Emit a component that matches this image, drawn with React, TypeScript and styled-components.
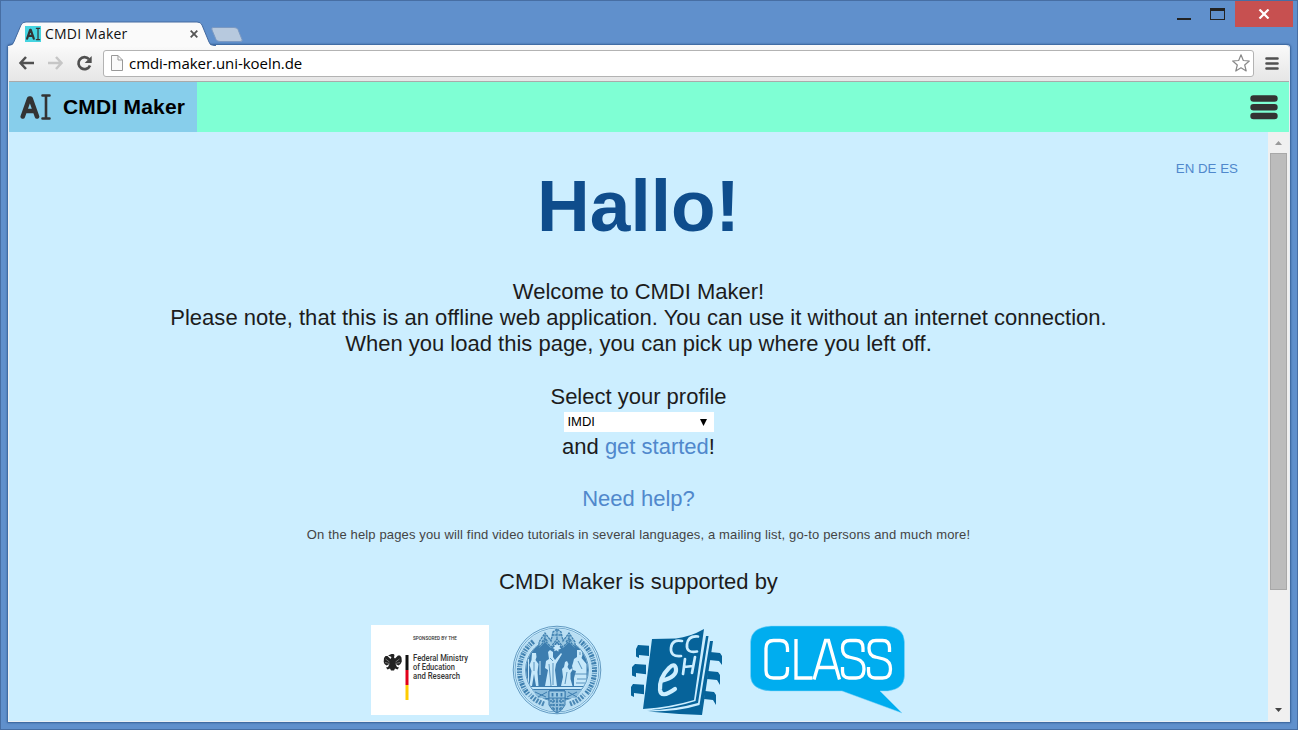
import React from "react";
import styled, { createGlobalStyle } from "styled-components";

const GlobalStyle = createGlobalStyle`
  * { box-sizing: border-box; }
  html, body { margin: 0; padding: 0; overflow: hidden; }
  body { font-family: "Liberation Sans", Arial, sans-serif; font-variant-ligatures: none; }
`;

const Window = styled.div`
  width: 1298px;
  height: 730px;
  padding: 0 7px 7px;
  border: 1px solid #476ea3;
  background: #6090cc;
  display: flex;
  flex-direction: column;
`;

const TitleBar = styled.header`
  height: 44px;
  display: flex;
  justify-content: space-between;
  align-items: flex-start;
  flex: none;
`;

const TabStrip = styled.div`
  display: flex;
  padding-top: 20px;
`;

const Tab = styled.div`
  position: relative;
  z-index: 1;
  width: 204px;
  height: 26px;
  padding: 0 14px 1px 17px;
  display: flex;
  align-items: center;
`;

const TabShape = styled.svg`
  position: absolute;
  left: 0;
  top: 0;
  z-index: -1;
`;

const TabTitle = styled.span`
  flex: 1;
  margin-left: 4px;
  font: 14px/20px "Open Sans", "Segoe UI", sans-serif;
  letter-spacing: 0.2px;
  color: #111;
  white-space: nowrap;
`;

const NewTab = styled.svg`
  margin: 4px 0 0 -2px;
`;

const WindowControls = styled.div`
  display: flex;
  align-items: flex-start;
  margin-right: -3px;
`;

const CloseButton = styled.div`
  width: 58px;
  height: 26px;
  padding-right: 1px;
  background: #c75050;
  display: flex;
  align-items: center;
  justify-content: center;
`;

const Browser = styled.div`
  flex: 1;
  min-height: 0;
  display: flex;
  flex-direction: column;
  border: 1px solid #e9eef3;
  border-top: 0;
  border-radius: 3px 3px 0 0;
  box-shadow: 0 0 2px 1px #365f96;
`;

const Toolbar = styled.div`
  height: 37px;
  flex: none;
  display: flex;
  align-items: center;
  padding: 0 9px 0 8px;
  background: linear-gradient(#fafafa, #e6e6e6);
  border-bottom: 1px solid #aaaaaa;
  border-radius: 3px 3px 0 0;
`;

const NavIcon = styled.svg`
  flex: none;
  margin-right: 10px;
`;

const AddressBar = styled.div`
  width: 1151px;
  height: 27px;
  margin: 0 11px 0 0;
  padding: 0 3px 0 7px;
  border: 1px solid #b3b3b3;
  border-radius: 3px;
  background: #fff;
  display: flex;
  align-items: center;
`;

const Address = styled.span`
  flex: 1;
  margin-left: 6px;
  font: 15px/22px "Open Sans", "Segoe UI", sans-serif;
  letter-spacing: -0.05px;
  color: #000;
`;

const AppBar = styled.div`
  height: 50px;
  flex: none;
  display: flex;
  justify-content: space-between;
  background: #7fffd4;
`;

const Brand = styled.div`
  width: 188px;
  padding-left: 11px;
  display: flex;
  align-items: center;
  background: #87ceeb;
  font-size: 21px;
  font-weight: bold;
  letter-spacing: 0.2px;
  color: #000;
  white-space: nowrap;
`;

const BrandName = styled.span`
  margin-left: 11px;
`;

const MenuIcon = styled.svg`
  margin: 13px 11px 0 0;
`;

const Viewport = styled.div`
  flex: 1;
  min-height: 0;
  display: flex;
`;

const Page = styled.main`
  flex: 1;
  overflow: hidden;
  background: #cceeff;
  color: #1c1c1c;
  text-align: center;
  font-size: 22px;
  line-height: 26px;
`;

const Languages = styled.nav`
  height: 46px;
  padding: 28px 30px 0 0;
  text-align: right;
  font-size: 13.33px;
  line-height: 18px;
  color: #5088cc;
`;

const Greeting = styled.h1`
  margin: -11px 0 0;
  font-size: 73px;
  line-height: 78px;
  color: #0f4d8c;
`;

const Paragraph = styled.p<{ $top: number }>`
  margin: ${(p) => p.$top}px 0 0;
`;

const Notice = styled.span`
  letter-spacing: 0.025px;
`;

const Link = styled.a`
  color: #5088cc;
`;

const ProfileSelect = styled.div`
  width: 150px;
  height: 20px;
  margin: 2px auto 1px;
  padding: 0 6px 0 4px;
  background: #fff;
  display: flex;
  justify-content: space-between;
  align-items: center;
  font-size: 13px;
  line-height: 20px;
  color: #000;
`;

const Hint = styled.p`
  margin: 14px 0 0;
  font-size: 13px;
  line-height: 18px;
  letter-spacing: 0.145px;
  color: #444;
`;

const Sponsors = styled.div`
  display: flex;
  justify-content: center;
  align-items: flex-start;
  margin-top: 30px;
  padding-left: 2px;
`;

const SponsorLogo = styled.svg<{ $gap?: number }>`
  flex: none;
  margin-left: ${(p) => p.$gap ?? 0}px;
`;

const Scrollbar = styled.div`
  width: 21px;
  flex: none;
  background: #f0f0f0;
  display: flex;
  flex-direction: column;
  align-items: center;
`;

const Arrow = styled.svg`
  flex: none;
`;

const Thumb = styled.div`
  width: 17px;
  height: 437px;
  background: #bcbcbc;
  border: 1px solid #a8a8a8;
`;

const Track = styled.div`
  flex: 1;
`;

const AiGlyph = () => (
  <g fill="none" stroke="#333" strokeLinecap="round" strokeLinejoin="round">
    <path d="M2.800 22.500 9.200 4.500h1.400l6.400 18M5.500 17h9.500" strokeWidth="4.600" />
    <path d="M22.500 1.500h7M22.500 24.500h7M26 2v22" strokeWidth="2.600" />
  </g>
);

const MinistryLogo = () => (
  <SponsorLogo width="118" height="90" viewBox="0 0 118 90">
    <rect width="118" height="90" fill="#fff" />
    <g fontFamily="Roboto, sans-serif" fill="#333">
      <text x="42" y="15" fontSize="5.400" fontWeight="500" textLength="44" lengthAdjust="spacingAndGlyphs">SPONSORED BY THE</text>
      <g fontSize="8.400" fontWeight="500">
        <text x="42" y="36" textLength="55" lengthAdjust="spacingAndGlyphs">Federal Ministry</text>
        <text x="42" y="45" textLength="42" lengthAdjust="spacingAndGlyphs">of Education</text>
        <text x="42" y="54" textLength="47" lengthAdjust="spacingAndGlyphs">and Research</text>
      </g>
    </g>
    <rect x="34.5" y="30" width="3" height="15" fill="#111" />
    <rect x="34.5" y="45" width="3" height="15" fill="#e2001a" />
    <rect x="34.5" y="60" width="3" height="15" fill="#fc0" />
    <g fill="#222">
      <path d="M20.500 32l-3.500-1.500 3.500-1.500h2l1 1-.5 2.500 1 1 3-3 2 0 1.500 2 .3 4-1.300 2.500-2 1.500-3-1.500 1.500 3 2 .5-1.500 2-2.500-1-1 2h-3l-1-2-2.500 1-1.500-2 2-.5 1.500-3-3 1.500-2-1.500L12.700 37l.3-4 1.500-2h2l3 3z" />
    </g>
    <path d="M14.500 34l4 3M14 37.500l4.500 1M28.500 34l-4 3M29 37.500l-4.500 1" stroke="#aaa" strokeWidth=".6" />
  </SponsorLogo>
);

const UniversitySeal = () => (
  <SponsorLogo $gap={22} width="92" height="92" viewBox="0 0 92 92">
    <defs>
      <clipPath id="sealInner"><circle cx="46" cy="45" r="31" /></clipPath>
    </defs>
    <g fill="none" stroke="#6199c1">
      <circle cx="46" cy="45" r="43.800" strokeWidth="1" />
      <circle cx="46" cy="45" r="42" strokeWidth=".8" />
      <circle cx="46" cy="45" r="31.500" strokeWidth="1" />
    </g>
    <circle cx="46" cy="45" r="36.800" fill="none" stroke="#b9def3" strokeWidth="8.500" />
    <path
      d="M17 69A37 37 0 0 1 23 16M69 16A37 37 0 0 1 75 69"
      fill="none" stroke="#3f80b0" strokeWidth="5" strokeDasharray="1.500 1.100 2.200 .9 .8 1.200"
    />
    <path
      d="M15 69A39 39 0 0 1 22 15M70 15A39 39 0 0 1 77 69"
      fill="none" stroke="#6fa5ca" strokeWidth="1.500" strokeDasharray="1 3.200"
    />
    <path d="M33 79A37 37 0 0 1 19 70M59 79A37 37 0 0 0 73 70" fill="none" stroke="#4b88b5" strokeWidth="5" strokeDasharray="2 1.200" />
    <circle cx="46" cy="45" r="31" fill="#3c7daf" />
    <g clipPath="url(#sealInner)" fill="#c6e8fa">
      <path d="M21 28h4l.5 4-1 3 3 4-1 8 1 14h-2.500l-2-12-2 12h-2.500l2-15-2-6 2-5z" />
      <path d="M17.500 34v28M29 36v14" fill="none" stroke="#c6e8fa" strokeWidth="1" />
      <path d="M37 27l2-2 3 2v5l2 3 6-7 1 1-6 10-1 6 2 16H34l3-16-3-2 1-7 3-2z" />
      <path d="M54 37l2-1 1.500 3-1 3 2 3 3-2v2l-2 3v6l2 7H50l2-9-1-8 2-2z" />
      <path d="M66 25h4.500l1 5-1 3 5 6v22H63v-8l2-7-3-1-1-4 1-3 1-4 3-2z" />
      <path d="M63 49h14M66 54h11M65 58h13M38 39l2 22M42 38v22M56 47l-2 12M67 36l4 8M69 27v3M23 37v9M39 33l3 3" fill="none" stroke="#4c8bb8" strokeWidth=".9" />
      <path d="M14 62h64v2H14z" />
      <path d="M46 18l1 2.300 2.600-.5-1.100 2.300 1.600 1.700-2.600.6-.1 2.300-2-1.500-2.200 1.100.4-2.300-2.100-1 2.300-1.300-.8-2.300 2.100.8z" />
    </g>
    <path d="M28 23v-6l6-9 6 8 2-9 4-3 4 3 2 9 6-8 6 9v6l-6-6-6 6-6-7-6 7-6-6z" fill="#9ac7e2" />
    <path
      d="M28 23v-6l6-9 6 8 2-9 4-3 4 3 2 9 6-8 6 9v6M28 22l6-6 6 6 6-8 6 8 6-6 6 6M34 10v6M46 5v9M58 10v6M41 10h10M31 17l3-4 3 4M55 17l3-4 3 4"
      fill="none" stroke="#3f80b0" strokeWidth="1.300" strokeDasharray="2.500 .7"
    />
    <path d="M21 65h17v8H27zM54 65h17l-6 8H54z" fill="#8bbcdc" />
    <path d="M24 67l11 5M27 72l9-5M57 67l9 5M56 72l10-5" stroke="#3c7daf" />
    <path d="M38 66h16v14q-3 6-8 8-5-2-8-8z" fill="#8fbddb" stroke="#3c7daf" />
    <path d="M38 66h16v7H38z" fill="#9cc9e4" stroke="#3c7daf" />
    <path d="M41.500 68v3.500M46 68v3.500M50.500 68v3.500" stroke="#3c7daf" strokeWidth="1.800" />
    <path d="M39 76h14M39 80h14M42 84h8M42 73v11M46 73v14M50 73v11" stroke="#3c7daf" strokeWidth="1.300" strokeDasharray="2 1" />
  </SponsorLogo>
);

const CcehLogo = () => (
  <SponsorLogo $gap={26} width="95" height="92" viewBox="0 0 95 92">
    <g fill="#06639a">
      <path d="M9 20l11 .7V31L10 30v3l-3-1.500V24zM6 39l11 .7v9.600L7 48v4l-4-1.500V42zM4 59l11 .7v9.600L5 68v4l-3-1.500V62z" />
      <path d="M81 27l10 1 2 3v9l-3-4-10-1zM79 46l10 1 2 3v10l-3-5-10-1zM76 66l9 1 2 3v10l-3-5-9-1z" />
      <path d="M23 14l24-.500Q61 12 75 4L65 75q-23 7-51 9z" />
      <path d="M77 11h2.500L69 78q-25 7-51 7.500Q45 83 66.500 76z" />
      <path d="M81 16h3l-11 74q-28-1-54-3.500Q48 87 70.500 80z" />
    </g>
    <g fill="none" stroke="#cceeff" strokeLinecap="round">
      <path d="M53 16q-10-2-11 7t10 8M69 11.500q-10-1-11 8t10 7M56 34l-2 15M66 32l-3 16M55 42l9-1" strokeWidth="2.700" />
      <path d="M32 56Q48 52 47 44q-1-7-7-1-10 10-9 22 1 9 15-1" strokeWidth="4.200" />
    </g>
  </SponsorLogo>
);

const ClassLogo = () => (
  <SponsorLogo $gap={26} width="158" height="92" viewBox="0 0 158 92">
    <path
      d="M21 1H136Q154 2 154.500 17V51Q154 64 138 66H130L152 88 92 66H21Q1 65 .5 51V17Q1 2 21 1z"
      fill="#00adef" stroke="#8ad4f7" strokeWidth=".5"
    />
    <g fill="none" stroke="#fff" strokeWidth="3.300">
      <path d="M37.500 27v-3.500Q37.500 15.500 30 15.500H23.500Q16 15.500 16 23.500V45.500Q16 53 23.500 53H30Q37.500 53 37.500 45.500V42" />
      <path d="M46 14V53H62.500" />
      <path d="M64 54.500L75.500 15.500H78.500L89.500 54.500M68 42.500H86" />
      <path d="M113 27V23Q113 15.500 106 15.500H100Q92.500 15.500 92.500 23 92.500 31 99 32L107 34Q114 36 114 44 114 53 106 53H99Q92.500 53 92.500 46V42" />
      <path d="M139.500 27V23Q139.500 15.500 132.500 15.500H126Q119 15.500 119 23 119 31 125.500 32L133.500 34Q140.500 36 140.500 44 140.500 53 132.500 53H125Q118.500 53 118.500 46V42" />
    </g>
  </SponsorLogo>
);

export default function App() {
  return (
    <>
      <GlobalStyle />
      <Window>
        <TitleBar>
          <TabStrip>
            <Tab>
              <TabShape width="212" height="26" viewBox="0 0 212 26">
                <path d="M0 26v-1q5 0 6-4L13 4q1-3 5-3H189q4 0 5 3l7 17q1 4 5 4v1z" fill="#fafafa" />
                <path d="M0 24.500q5 0 6-4L13 4q1-3 5-3H189q4 0 5 3l7 17q1 3.500 5 3.500h2" fill="none" stroke="#456ba0" />
              </TabShape>
              <svg width="16" height="16" viewBox="0 0 16 16">
                <rect width="16" height="16" fill="#45d4e0" />
                <g transform="translate(.8 1.600) scale(.47 .49)"><AiGlyph /></g>
              </svg>
              <TabTitle>CMDI Maker</TabTitle>
              <svg width="8" height="8" viewBox="0 0 8 8">
                <path d="M.7.7l6.600 6.600M7.300.7L.7 7.300" stroke="#555" strokeWidth="1.800" />
              </svg>
            </Tab>
            <NewTab width="33" height="18" viewBox="0 0 33 18">
              <path d="M3 2.500h21q3 0 4 2l4 10q1 2-2 2H10q-3 0-4-2L2 5q-1-2.500 1-2.500z" fill="#b7c9de" stroke="#7b99c2" />
            </NewTab>
          </TabStrip>
          <WindowControls>
            <svg width="58" height="26" viewBox="0 0 58 26">
              <path d="M0 17h14v2H0z" fill="#222" />
              <path d="M33 7h15v12H33zM34 10v8h13v-8z" fill="#222" fillRule="evenodd" />
            </svg>
            <CloseButton>
              <svg width="12" height="10" viewBox="0 0 12 10">
                <path d="M1.500.5l9 9M10.500.5l-9 9" stroke="#fff" strokeWidth="2.200" />
              </svg>
            </CloseButton>
          </WindowControls>
        </TitleBar>
        <Browser>
          <Toolbar>
            <NavIcon width="20" height="18" viewBox="0 0 20 18">
              <path d="M9 3L3.500 9 9 15M3.500 9H17" fill="none" stroke="#505050" strokeWidth="2.500" />
            </NavIcon>
            <NavIcon width="18" height="18" viewBox="0 0 18 18">
              <path d="M9 3l5.500 6L9 15M14.500 9H1" fill="none" stroke="#c6c6c6" strokeWidth="2.500" />
            </NavIcon>
            <NavIcon width="18" height="18" viewBox="0 0 18 18">
              <path d="M14 5.200A6 6 0 1 0 15 11.500" fill="none" stroke="#505050" strokeWidth="2.700" />
              <path d="M16.700 2v7H9.700z" fill="#505050" />
            </NavIcon>
            <AddressBar>
              <svg width="12" height="16" viewBox="0 0 12 16">
                <path d="M.5.5h6.500l4.500 4.500v10.500H.5zM7 .5V5h4.500" fill="#fafafa" stroke="#999" />
              </svg>
              <Address>cmdi-maker.uni-koeln.de</Address>
              <svg width="18" height="18" viewBox="0 0 18 18">
                <path d="M9 .8l2.300 5.700 6 .5-4.600 4 1.500 6L9 13.800 3.800 17l1.500-6L.7 7l6-.5z" fill="#fff" stroke="#888" strokeWidth="1.200" strokeLinejoin="round" />
              </svg>
            </AddressBar>
            <svg width="14" height="14" viewBox="0 0 14 14">
              <path d="M1.500 2.500h11M1.500 7.500h11M1.500 12.500h11" stroke="#505050" strokeWidth="2.600" strokeLinecap="round" />
            </svg>
          </Toolbar>
          <AppBar>
            <Brand>
              <svg width="32" height="26" viewBox="0 0 32 26"><AiGlyph /></svg>
              <BrandName>CMDI Maker</BrandName>
            </Brand>
            <MenuIcon width="28" height="25" viewBox="0 0 28 25">
              <path d="M3.500 3.500h21M3.500 12.300h21M3.500 21h21" stroke="#333" strokeWidth="6.400" strokeLinecap="round" />
            </MenuIcon>
          </AppBar>
          <Viewport>
            <Page>
              <Languages>EN DE ES</Languages>
              <Greeting>Hallo!</Greeting>
              <Paragraph $top={34}>
                Welcome to CMDI Maker!<br />
                <Notice>Please note, that this is an offline web application. You can use it without an internet connection.</Notice><br />
                When you load this page, you can pick up where you left off.
              </Paragraph>
              <Paragraph $top={27}>Select your profile</Paragraph>
              <ProfileSelect>
                IMDI
                <svg width="8" height="7" viewBox="0 0 8 7"><path d="M0 0h7L3.500 7z" /></svg>
              </ProfileSelect>
              <Paragraph $top={2}>and <Link>get started</Link>!</Paragraph>
              <Paragraph $top={26}><Link>Need help?</Link></Paragraph>
              <Hint>On the help pages you will find video tutorials in several languages, a mailing list, go-to persons and much more!</Hint>
              <Paragraph $top={25}>CMDI Maker is supported by</Paragraph>
              <Sponsors>
                <MinistryLogo />
                <UniversitySeal />
                <CcehLogo />
                <ClassLogo />
              </Sponsors>
            </Page>
            <Scrollbar>
              <Arrow width="17" height="21" viewBox="0 0 17 21"><path d="M5 13h7L8.500 9z" fill="#999" /></Arrow>
              <Thumb />
              <Track />
              <Arrow width="17" height="21" viewBox="0 0 17 21"><path d="M5 8h7L8.500 12z" fill="#444" /></Arrow>
            </Scrollbar>
          </Viewport>
        </Browser>
      </Window>
    </>
  );
}
